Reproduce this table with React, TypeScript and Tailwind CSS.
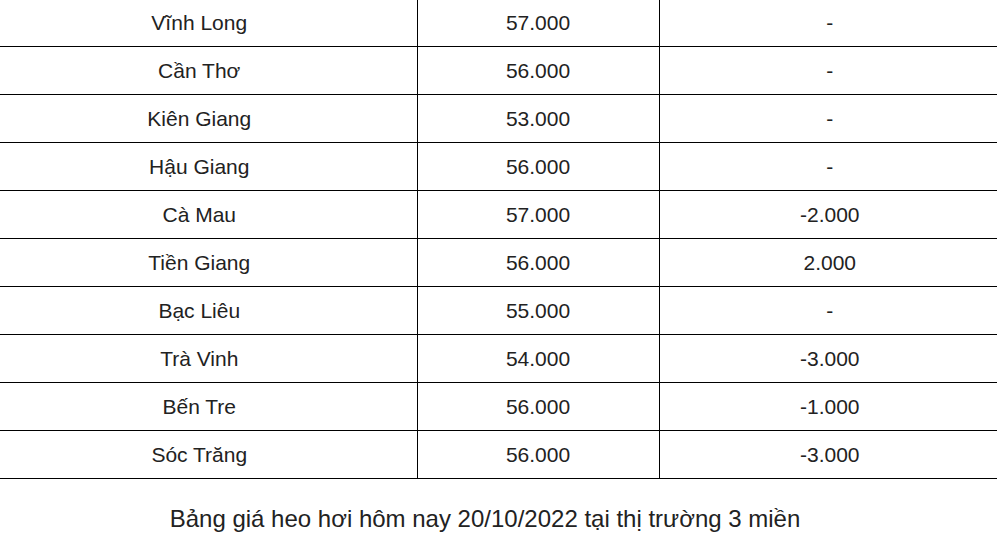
const rows: [string, string, string][] = [
  ["Vĩnh Long", "57.000", "-"],
  ["Cần Thơ", "56.000", "-"],
  ["Kiên Giang", "53.000", "-"],
  ["Hậu Giang", "56.000", "-"],
  ["Cà Mau", "57.000", "-2.000"],
  ["Tiền Giang", "56.000", "2.000"],
  ["Bạc Liêu", "55.000", "-"],
  ["Trà Vinh", "54.000", "-3.000"],
  ["Bến Tre", "56.000", "-1.000"],
  ["Sóc Trăng", "56.000", "-3.000"],
];

export default function App() {
  return (
    <div className="w-[997px] h-[540px] overflow-hidden bg-white text-[#222] font-['Liberation_Sans',Arial,sans-serif]">
      <table className="w-[997px] border-collapse table-fixed -mt-[2px] text-[21px]">
        <colgroup>
          <col className="w-[417px]" />
          <col className="w-[242px]" />
          <col />
        </colgroup>
        <tbody>
          {rows.map(([name, price, change]) => (
            <tr key={name} className="h-[48px] border-b border-black">
              <td className="pt-[2px] pr-[18px] text-center align-middle border-r border-black">{name}</td>
              <td className="pt-[2px] text-center align-middle border-r border-black">{price}</td>
              <td className="pt-[2px] pl-[3px] text-center align-middle">{change}</td>
            </tr>
          ))}
        </tbody>
      </table>
      <p className="mt-[25px] pr-[27px] text-center text-[24px] leading-[30px]">
        Bảng giá heo hơi hôm nay 20/10/2022 tại thị trường 3 miền
      </p>
    </div>
  );
}
